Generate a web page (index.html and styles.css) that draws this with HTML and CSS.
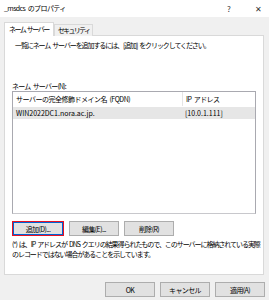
FILE: index.html
```html
<!DOCTYPE html>
<html lang="ja">
<head>
  <meta charset="UTF-8" />
  <title>_msdcs のプロパティ</title>
  <link rel="stylesheet" href="styles.css">
</head>
<body>
  <!-- Title Bar -->
  <div class="title-bar">
    <span class="title">_msdcs のプロパティ</span>
    <span class="title-btn help">?</span>
    <span class="title-btn close">✕</span>
  </div>

  <!-- Tabs -->
  <div class="tabs">
    <div class="tab active">ネーム サーバー</div>
    <div class="tab">セキュリティ</div>
  </div>

  <!-- Tab Panel -->
  <div class="panel">
    <p class="desc">一覧にネーム サーバーを追加するには、[追加] をクリックしてください。</p>

    <p class="label">ネーム サーバー(N):</p>
    <div class="list-box">
      <div class="list-row list-head">
        <span class="col-name">サーバーの完全修飾ドメイン名 (FQDN)</span>
        <span class="col-ip">IP アドレス</span>
      </div>
      <div class="list-row selected">
        <span class="col-name latin">WIN2022DC1.nora.ac.jp.</span>
        <span class="col-ip latin">[10.0.1.111]</span>
      </div>
    </div>

    <div class="btn-row">
      <button class="btn focused">追加(D)...</button>
      <button class="btn">編集(E)...</button>
      <button class="btn">削除(R)</button>
    </div>

    <p class="note">(*) は、IP アドレスが DNS クエリの結果得られたもので、このサーバーに格納されている実際<br>のレコードではない場合があることを示しています。</p>
  </div>

  <!-- Dialog Buttons -->
  <div class="dialog-buttons">
    <button class="btn latin">OK</button>
    <button class="btn">キャンセル</button>
    <button class="btn">適用(A)</button>
  </div>
</body>
</html>
```

FILE: styles.css
```css
body {
  font-family: "Noto Sans CJK JP", "Liberation Sans", sans-serif;
  font-size: 7px;
  letter-spacing: -1px;
  word-spacing: 1.5px;
  margin: 0;
  padding: 0;
  background-color: #f0f0f0;
  color: #000;
  width: 269px;
  height: 300px;
  overflow: hidden;
}

.latin {
  letter-spacing: 0;
  word-spacing: 0;
}

.title-bar {
  display: flex;
  align-items: center;
  height: 17px;
  background-color: #fff;
  padding-left: 4px;
}

.title {
  flex-grow: 1;
  line-height: 1;
  letter-spacing: -0.6px;
}

.title-btn {
  font-size: 8px;
  color: #333;
  text-align: center;
  letter-spacing: 0;
}

.help {
  width: 12px;
  margin-right: 17px;
}

.close {
  width: 12px;
  margin-right: 5px;
}

.tabs {
  display: flex;
  align-items: flex-end;
  margin: 5px 0 0 4px;
  height: 13px;
}

.tab {
  height: 11px;
  line-height: 11px;
  padding: 0 3px;
  letter-spacing: -1.7px;
  background-color: #f0f0f0;
  border: 1px solid #d9d9d9;
  border-bottom: none;
  margin-bottom: -1px;
}

.tab.active {
  height: 13px;
  line-height: 13px;
  padding: 0 4px;
  letter-spacing: -1.5px;
  background-color: #fff;
  position: relative;
  z-index: 1;
}

.panel {
  margin: 0 5px 0 4px;
  height: 238px;
  background-color: #fff;
  border: 1px solid #d9d9d9;
  padding: 0 7px;
}

.desc {
  margin: 5px 0 0 3px;
  line-height: 9px;
  letter-spacing: -1.1px;
}

.label {
  margin: 32px 0 0 0;
  line-height: 9px;
  letter-spacing: -0.8px;
}

.list-box {
  height: 121px;
  border: 1px solid #a9a9b0;
  border-bottom-color: #c8c8cc;
}

.list-row {
  display: flex;
  height: 12px;
  line-height: 12px;
}

.list-head {
  height: 14px;
  line-height: 14px;
}

.col-name {
  width: 166px;
  padding-left: 3px;
}

.list-head .col-name {
  border-right: 1px solid #e5e5e5;
  letter-spacing: -0.5px;
}

.col-ip {
  padding-left: 3px;
}

.list-head .col-ip {
  letter-spacing: -0.6px;
}

.selected {
  background-color: #e6e6e6;
  margin: 1px 0;
}

.btn-row {
  display: flex;
  gap: 5px;
  margin-top: 7px;
}

.btn {
  font-family: inherit;
  font-size: 7px;
  letter-spacing: -0.6px;
  width: 50px;
  height: 15px;
  padding: 0;
  background-color: #e1e1e1;
  border: 1px solid #adadad;
  color: #000;
}

.btn.focused {
  width: 52px;
  border: 1px solid #e81123;
  box-shadow: inset 0 0 0 1px #0063d4;
}

.note {
  margin: 3px 0 0 0;
  line-height: 10px;
  white-space: nowrap;
  letter-spacing: -1.05px;
}

.dialog-buttons {
  display: flex;
  justify-content: flex-end;
  gap: 5px;
  margin: 7px 4px 0 0;
}
```
